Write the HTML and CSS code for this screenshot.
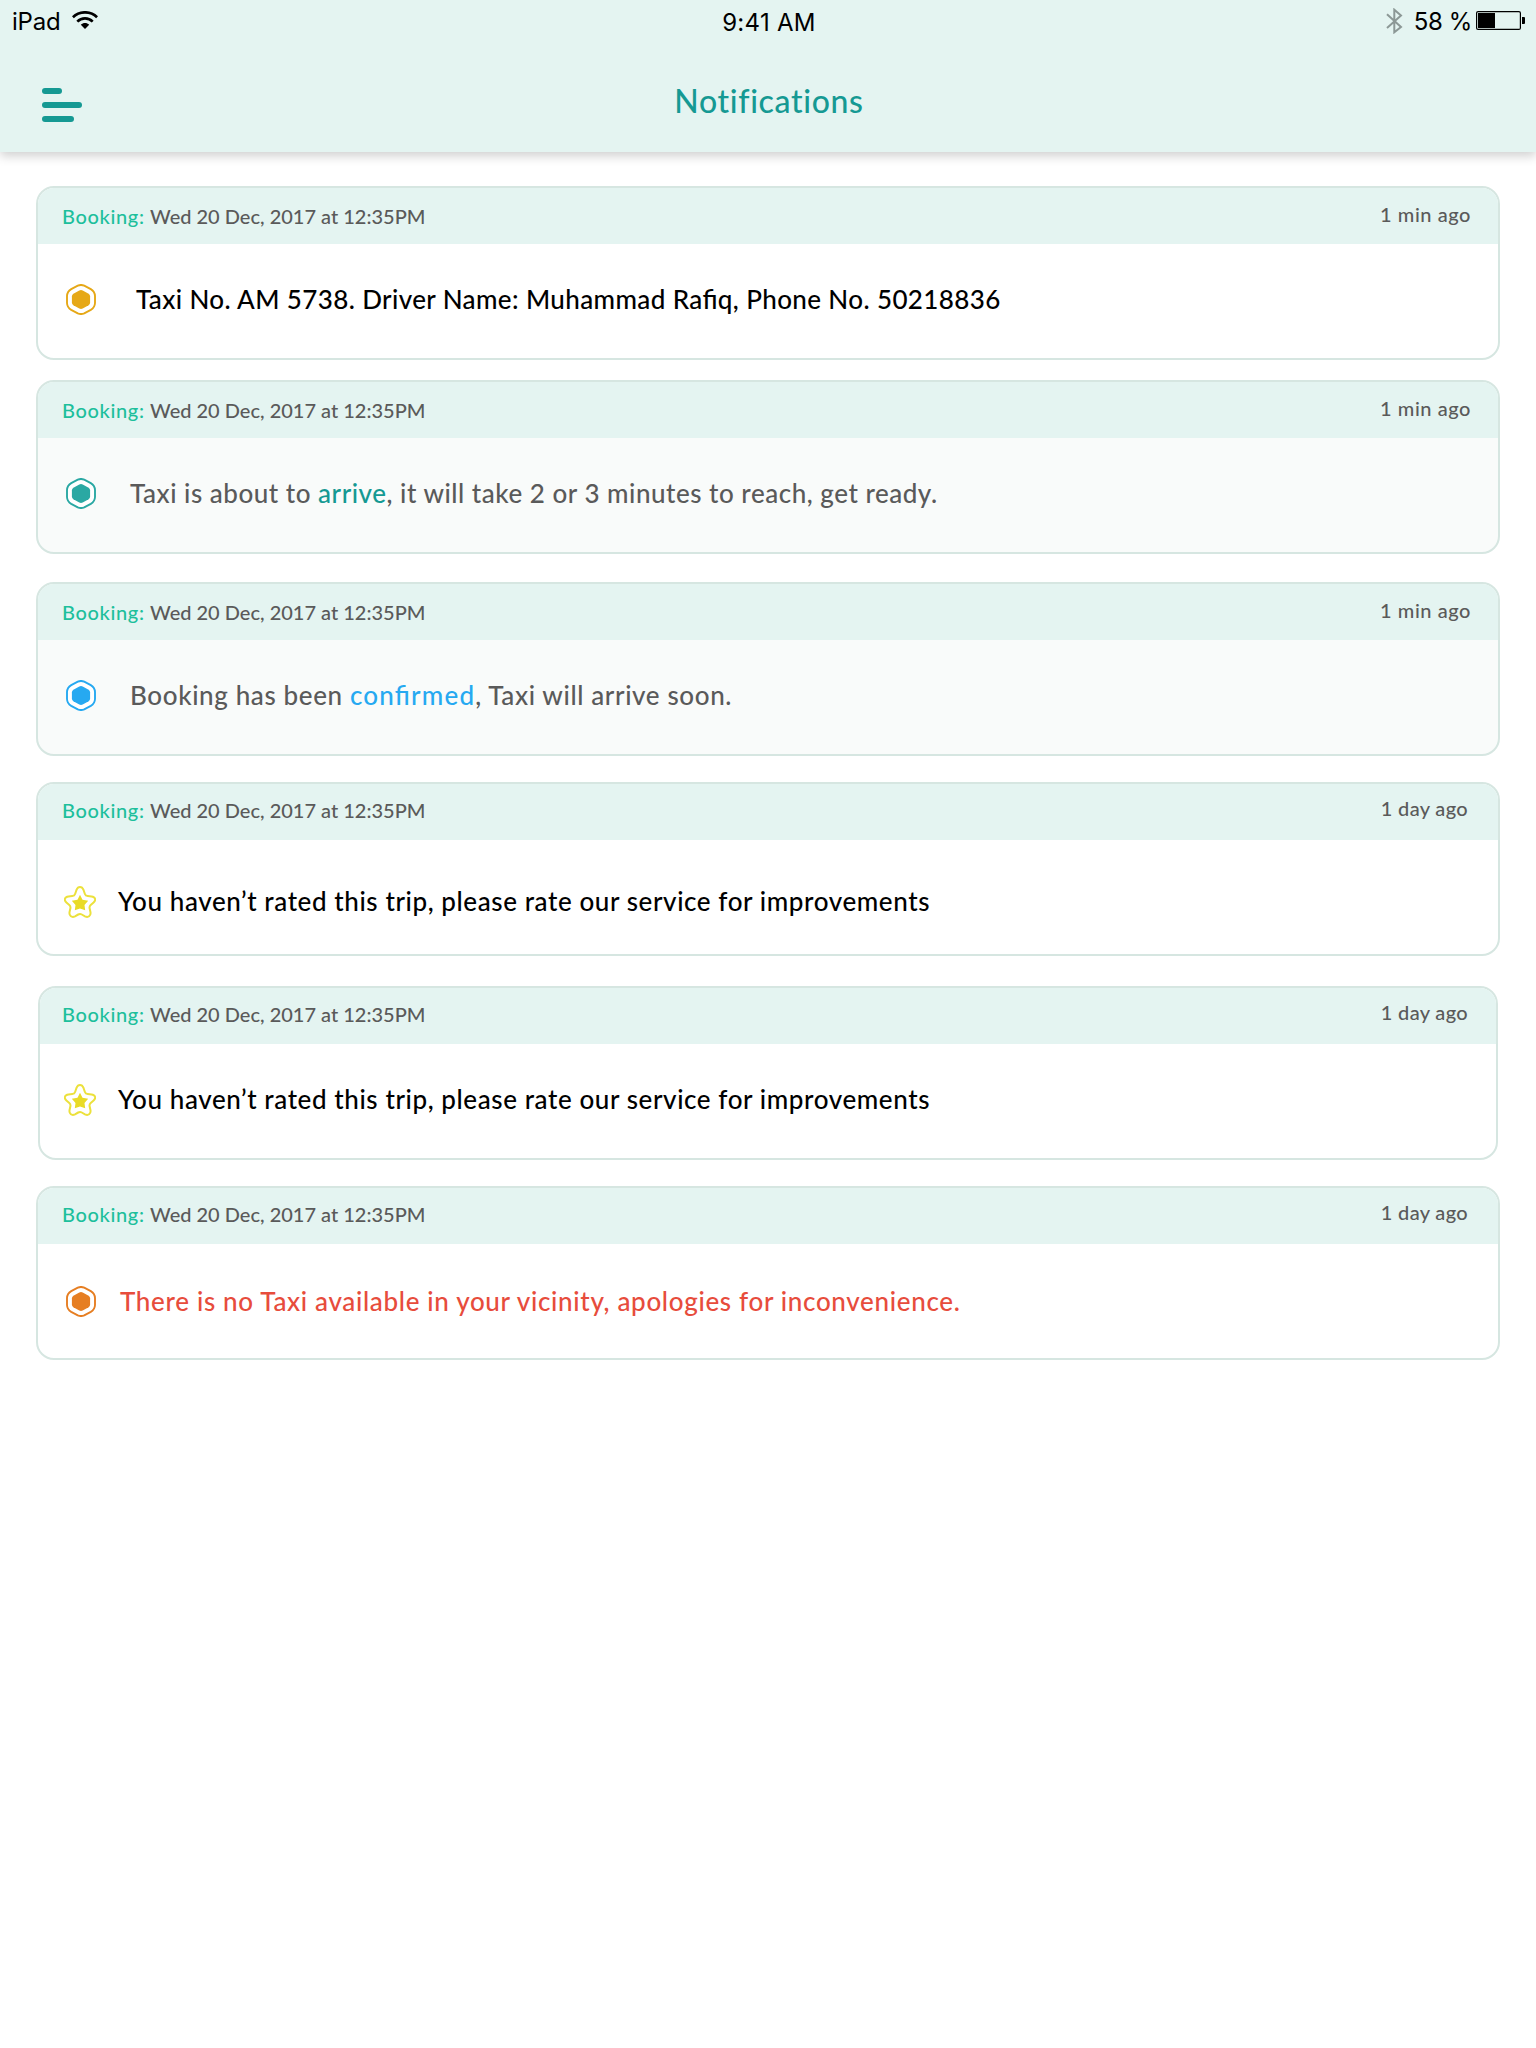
FILE: index.html
```html
<!DOCTYPE html>
<html lang="en">
<head>
<meta charset="utf-8">
<title>Notifications</title>
<link rel="stylesheet" href="styles.css">
</head>
<body>
<svg width="0" height="0" class="defs" aria-hidden="true">
  <symbol id="hex" viewBox="0 0 30 31">
    <path d="M11.800 1.700Q15 .200 18.200 1.700L24.800 5.100Q28.800 7.500 29 12V19Q28.800 23.500 24.800 25.900L18.200 29.300Q15 30.800 11.800 29.300L5.200 25.900Q1.200 23.500 1 19V12Q1.200 7.500 5.200 5.100Z" fill="#fff" stroke="currentColor" stroke-width="1.900"/>
    <path d="M13.300 6.400Q15 5.600 16.700 6.400L22.600 9.700Q24.100 10.700 24.100 12.500V18.500Q24.100 20.300 22.600 21.300L16.700 24.600Q15 25.400 13.300 24.600L7.400 21.300Q5.900 20.300 5.900 18.500V12.500Q5.900 10.700 7.400 9.700Z" fill="currentColor"/>
  </symbol>
  <symbol id="star" viewBox="0 0 32 32">
    <path d="M12.600 3.700C14 .100 18 .100 19.400 3.700L20.900 8C21.400 9.500 22.200 10 23.700 10.100L27.500 10.400C31.400 10.900 32.300 14.100 29.600 16.500L26.700 19C25.600 20 25.300 20.900 25.600 22.300L26.500 26.300C27 30 24.200 31.900 21 30.300L17.800 28.500C16.500 27.800 15.500 27.800 14.200 28.500L11 30.300C7.800 31.900 5 30 5.500 26.300L6.400 22.300C6.700 20.900 6.400 20 5.300 19L2.400 16.500C-.300 14.100 .600 10.900 4.500 10.400L8.300 10.100C9.800 10 10.600 9.500 11.100 8Z" fill="#fff" stroke="currentColor" stroke-width="2" stroke-linejoin="round"/>
    <path d="M16 8.800L18.500 13.700L24.200 14.700L20.500 18.900L21.200 24.300L16 22.400L10.800 24.300L11.500 18.900L7.800 14.700L13.500 13.700Z" fill="#e9db26"/>
  </symbol>
</svg>

<header class="top">
  <div class="status">
    <div class="status-left">
      <span class="device">iPad</span>
      <svg class="wifi" viewBox="0 0 26 18" width="26" height="18" fill="none" stroke="#000" stroke-width="2.700">
        <path d="M.900 6.200C7.500 -.300 18.500 -.300 25.100 6.200"/>
        <path d="M5.300 10.600C9.600 6.400 16.400 6.400 20.700 10.600"/>
        <path d="M13 18L8.800 13.800C11.200 11.500 14.800 11.500 17.200 13.800Z" fill="#000" stroke="none"/>
      </svg>
    </div>
    <div class="time">9:41 AM</div>
    <div class="status-right">
      <svg class="bluetooth" viewBox="0 0 17 26" width="17" height="26" fill="none" stroke="#8c9896" stroke-width="2">
        <path d="M1 6.200L15 19L8.300 24.300V1.700L15 7.500L1 20"/>
      </svg>
      <span class="percent">58 %</span>
      <svg class="battery" viewBox="0 0 49 19" width="49" height="19">
        <rect x=".600" y=".600" width="43.800" height="17.800" rx="1.500" fill="none" stroke="#000" stroke-width="1.200"/>
        <rect x="2" y="2" width="17" height="15" fill="#000"/>
        <path d="M46 6H48Q49 6 49 7V12Q49 13 48 13H46Z" fill="#000"/>
      </svg>
    </div>
  </div>
  <div class="nav">
    <button class="menu" aria-label="Menu"><i class="bar short"></i><i class="bar"></i><i class="bar mid"></i></button>
    <h1 class="title">Notifications</h1>
  </div>
</header>

<main class="list">
  <article class="card first">
    <div class="head"><span class="label">Booking:</span><span class="date">Wed 20 Dec, 2017 at 12:35PM</span><span class="ago">1 min ago</span></div>
    <div class="body"><svg class="icon hex amber"><use href="#hex"/></svg><p class="msg driver">Taxi No. AM 5738. Driver Name: Muhammad Rafiq, Phone No. 50218836</p></div>
  </article>
  <article class="card read near">
    <div class="head"><span class="label">Booking:</span><span class="date">Wed 20 Dec, 2017 at 12:35PM</span><span class="ago">1 min ago</span></div>
    <div class="body"><svg class="icon hex teal"><use href="#hex"/></svg><p class="msg arriving">Taxi is about to <span class="arrive">arrive</span>, it will take 2 or 3 minutes to reach, get ready.</p></div>
  </article>
  <article class="card read far">
    <div class="head"><span class="label">Booking:</span><span class="date">Wed 20 Dec, 2017 at 12:35PM</span><span class="ago">1 min ago</span></div>
    <div class="body"><svg class="icon hex blue"><use href="#hex"/></svg><p class="msg booked">Booking has been <span class="confirmed">confirmed</span>, Taxi will arrive soon.</p></div>
  </article>
  <article class="card day low">
    <div class="head"><span class="label">Booking:</span><span class="date">Wed 20 Dec, 2017 at 12:35PM</span><span class="ago">1 day ago</span></div>
    <div class="body"><svg class="icon star"><use href="#star"/></svg><p class="msg rate">You haven’t rated this trip, please rate our service for improvements</p></div>
  </article>
  <article class="card day inset">
    <div class="head"><span class="label">Booking:</span><span class="date">Wed 20 Dec, 2017 at 12:35PM</span><span class="ago">1 day ago</span></div>
    <div class="body"><svg class="icon star"><use href="#star"/></svg><p class="msg rate">You haven’t rated this trip, please rate our service for improvements</p></div>
  </article>
  <article class="card day last">
    <div class="head"><span class="label">Booking:</span><span class="date">Wed 20 Dec, 2017 at 12:35PM</span><span class="ago">1 day ago</span></div>
    <div class="body"><svg class="icon hex orange"><use href="#hex"/></svg><p class="msg none">There is no Taxi available in your vicinity, apologies for inconvenience.</p></div>
  </article>
</main>
</body>
</html>
```
FILE: styles.css
```css
* { box-sizing: border-box; margin: 0; padding: 0; }
body { background: #fff; min-height: 2048px; font-family: Lato, sans-serif; font-weight: 500; }
.defs { position: absolute; }

.top { height: 152px; background: #e4f4f1; box-shadow: 0 4px 10px rgba(0, 0, 0, .19); }
.status { display: grid; grid-template-columns: 1fr auto 1fr; height: 48px; padding: 7px 11px 0 12px; font: 400 24px/30px Inter, sans-serif; color: #000; }
.status-left { display: flex; }
.device { width: 60px; letter-spacing: -.2px; }
.wifi { margin-top: 4px; }
.time { margin: 1px 0 0 1px; letter-spacing: .3px; }
.status-right { display: flex; justify-content: flex-end; }
.bluetooth { margin: 1px 11px 0 0; }
.percent { letter-spacing: -.4px; margin-right: 4px; }
.battery { margin-top: 4px; }

.nav { display: grid; grid-template-columns: 1fr auto 1fr; height: 104px; padding: 0 42px; }
.menu { display: flex; flex-direction: column; gap: 8px; width: 40px; height: 34px; margin-top: 40px; border: 0; background: none; }
.bar { width: 40px; height: 6px; border-radius: 3px; background: #159993; }
.short { width: 20px; }
.mid { width: 32px; }
.title { margin: 33px 0 0 2px; font-size: 32px; line-height: 40px; font-weight: 500; letter-spacing: .65px; color: #159993; }

.list { display: flex; flex-direction: column; padding: 34px 36px 0; }
.card { height: 174px; border: 2px solid #d6e6e1; border-radius: 18px; overflow: hidden; background: #fff; }
.read { background: #f9fbfa; color: #5a5a5a; }
.near { margin-top: 20px; }
.far { margin-top: 28px; }
.low { margin-top: 26px; }
.inset { margin: 30px 2px 0; }
.last { margin-top: 26px; }

.head { display: flex; height: 56px; padding: 16px 27px 0 24px; background: #e4f4f1; font-size: 20px; line-height: 24px; color: #5a5a5a; }
.label { width: 88px; letter-spacing: .65px; color: #1dbf9c; }
.date { flex: 1; letter-spacing: 0; }
.ago { margin-top: -2px; letter-spacing: .55px; }
.day .head { padding: 14px 30px 0 24px; }
.day .ago { letter-spacing: .34px; }
.inset .head { padding: 14px 28px 0 22px; }

.body { display: flex; padding: 38px 0 0 28px; }
.low .body { padding: 44px 0 0 26px; }
.inset .body { padding-left: 24px; }
.last .body { padding-top: 40px; }
.icon { flex: none; margin-top: 2px; }
.hex { width: 30px; height: 31px; }
.star { width: 32px; height: 32px; color: #ece13c; }
.amber { color: #e6a817; }
.teal { color: #2aa8a3; }
.blue { color: #26a9f1; }
.orange { color: #e67e22; }

.msg { margin-top: 1px; font-size: 26px; line-height: 32px; white-space: nowrap; font-feature-settings: "liga" 1; }
.driver { margin-left: 40px; letter-spacing: .39px; color: #000; }
.arriving { margin-left: 34px; letter-spacing: .52px; }
.arrive { color: #159993; }
.booked { margin-left: 34px; letter-spacing: .62px; }
.confirmed { letter-spacing: 1.2px; color: #26a9f1; }
.rate { margin-left: 22px; letter-spacing: .59px; color: #000; }
.none { margin-left: 24px; letter-spacing: .67px; color: #e74c3c; }
```
